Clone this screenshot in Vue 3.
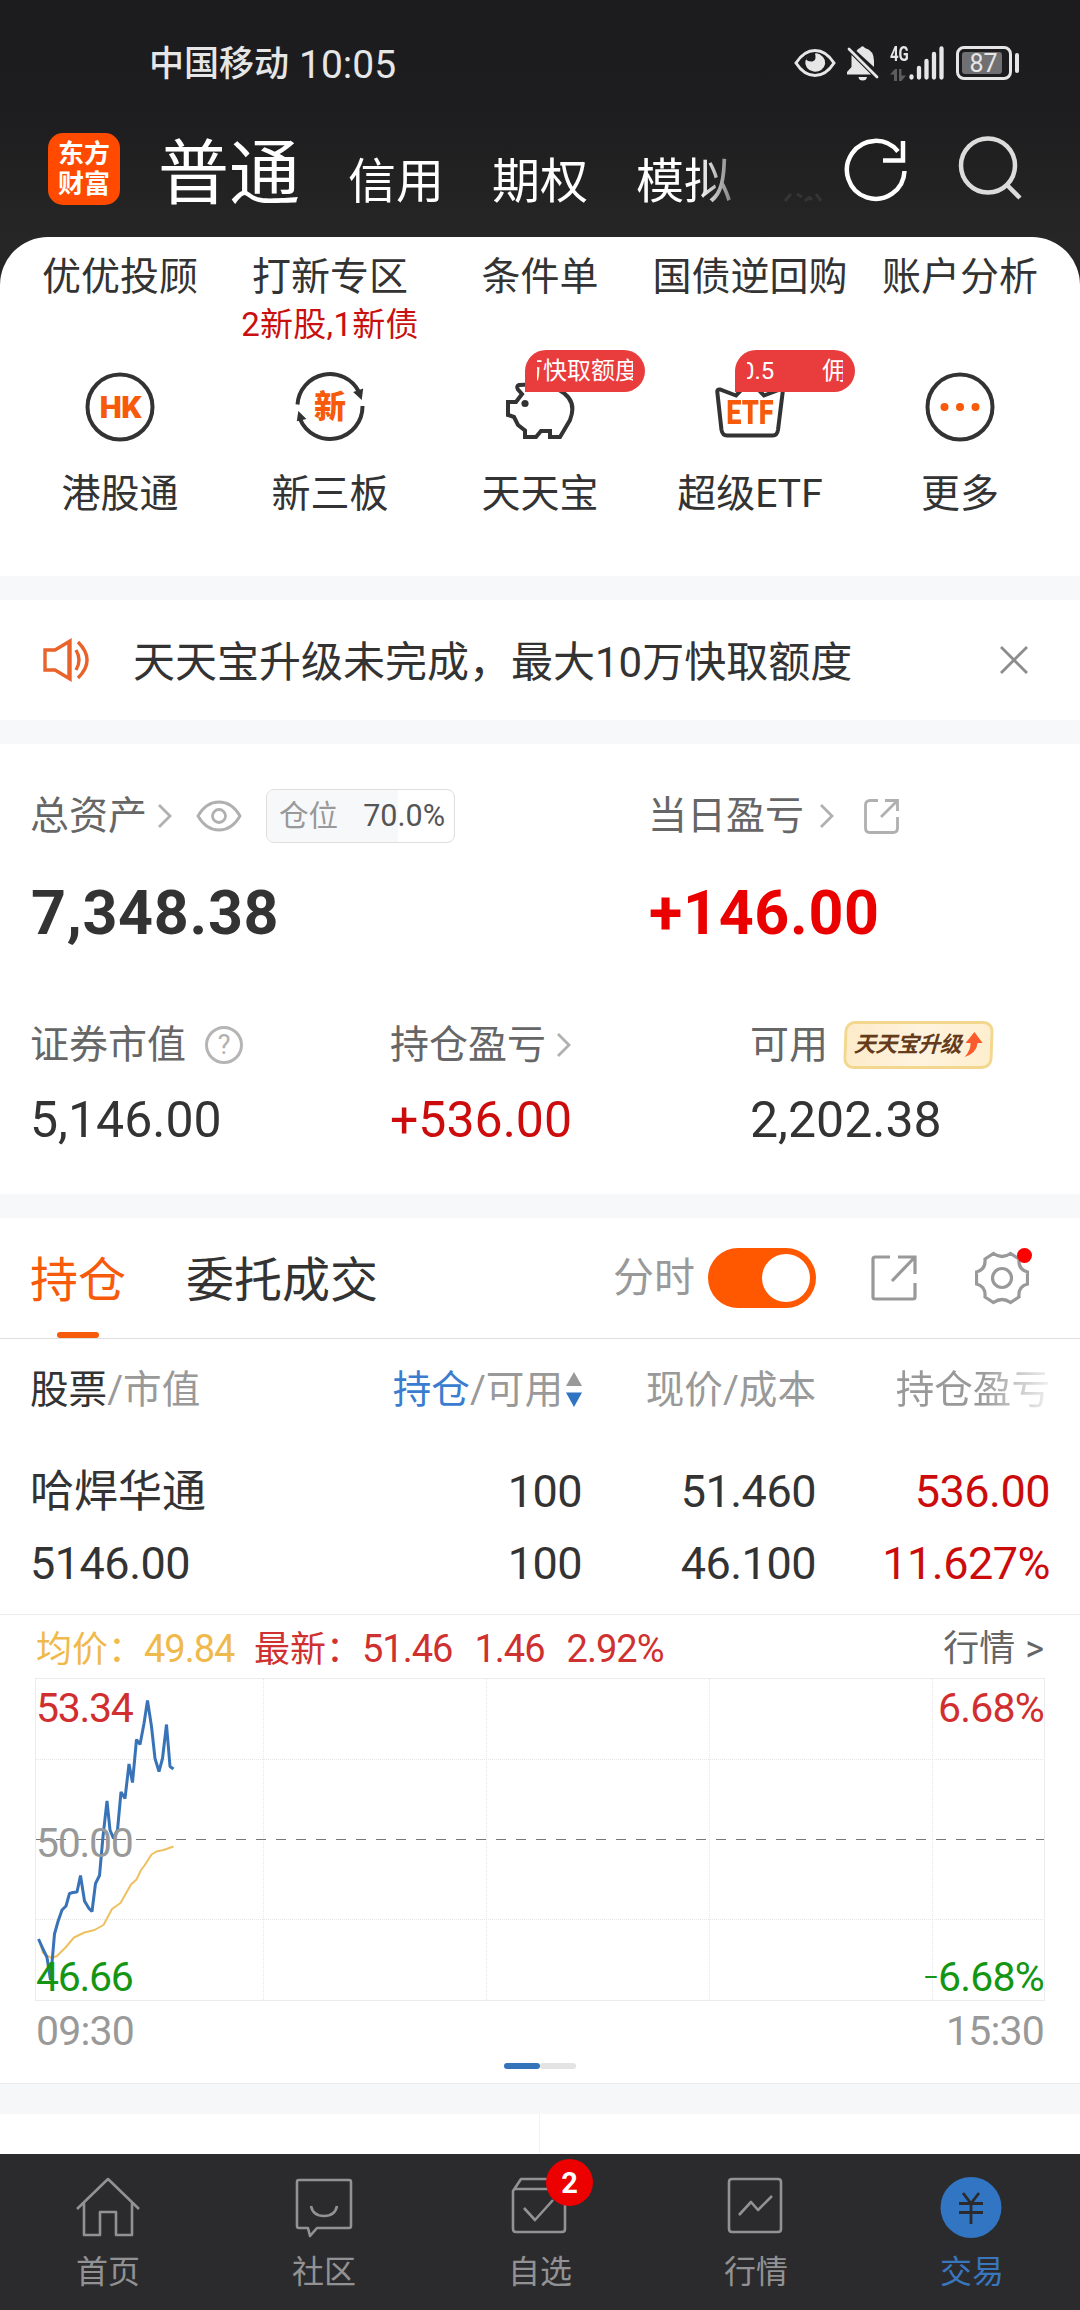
<script setup>
import { ref } from 'vue'

const accountTabs = ['信用', '期权', '模拟']

const shortcuts = [
  { name: '优优投顾' },
  { name: '打新专区', tip: '2新股,1新债' },
  { name: '条件单' },
  { name: '国债逆回购' },
  { name: '账户分析' },
]

const services = [
  { name: '港股通', icon: 'hk' },
  { name: '新三板', icon: 'xin' },
  { name: '天天宝', icon: 'pig', badge: ['万快取额度'] },
  { name: '超级ETF', icon: 'etf', badge: ['0.5', '佣'] },
  { name: '更多', icon: 'more' },
]

const positionRate = ref(70)
const showTimeline = ref(true)

const holdings = [
  { name: '哈焊华通', value: '5146.00', amount: '100', usable: '100', price: '51.460', cost: '46.100', profit: '536.00', rate: '11.627%' },
]

// chart drawing area is 1008 x 321
const gridX = [227.5, 450.5, 673.5, 896.5]
const gridY = [80.5, 240.5]
const priceLine = '2.5,260 7,270 11,278.5 14.5,301 18.5,255 22,242.5 26,231 30,227 33.5,214.5 37,213.5 41,213 44.5,196.5 48.5,222 53,229.5 56,232.5 59.5,204.5 63.5,196.5 67,157.5 71,122 74,151 77.5,159.5 81.5,151 85,113 89,119.5 93,85 96.5,103.5 100.5,60.5 104,65.5 108,44.5 111.5,21.5 115.5,47.5 119,79.5 123,92.5 126.5,79.5 130.5,45.5 134,87.5 137.5,90'
const avgLine = '3,261 7,274 15.5,279 21,277 29.5,268.5 38,258.5 48.5,253.5 58.5,251 67.5,246 76,230 84.5,224 95,205.5 100.5,200.5 105,191 108.5,186.5 115.5,175.5 120.5,172.5 127.5,171 137.5,167.5'

const activeNav = ref('交易')
const navs = [
  { name: '首页', icon: 'home' },
  { name: '社区', icon: 'chat' },
  { name: '自选', icon: 'pick', count: 2 },
  { name: '行情', icon: 'quote' },
  { name: '交易', icon: 'trade' },
]
</script>

<template>
  <div class="page">
    <header class="header">
      <div class="status">
        <div class="carrier">中国移动 <span class="clock">10:05</span></div>
        <div class="status-icons">
          <svg class="s-eye" width="42" height="30" viewBox="0 0 42 30">
            <path d="M2 15 Q10 2.5 21 2.5 T40 15 Q32 27.5 21 27.5 T2 15Z" fill="none" stroke="#e6e6e6" stroke-width="3" />
            <path d="M16 7 a10 9 0 1 0 13 2 Q25 4.500 21 5.500 Q23 12 18.500 13.500 Q14 14 12 11.500 Q13 8.500 16 7Z" fill="#e6e6e6" />
          </svg>
          <svg class="s-bell" width="32" height="35" viewBox="0 0 32 35">
            <path d="M4.500 9 L24 28.500 H0 V26 L4.500 21Z M9.500 5 Q11 2.500 13 2 Q15.500 -1.500 18 2 Q27 4.500 27 15 V21Z M11.500 31 H20 Q19.500 34.500 15.700 34.500 T11.500 31Z" fill="#e6e6e6" />
            <path d="M2 3 L30 31" stroke="#e6e6e6" stroke-width="2.800" stroke-linecap="round" />
          </svg>
          <div class="signal">
            <div class="net">
              <span>4G</span>
              <svg width="16" height="12" viewBox="0 0 16 12" fill="#5c5c5e">
                <path d="M0 5.500 L5 0 H7 V12 H4 V5.500Z M9 0 H11.500 V6.500 H16 L11.500 12 H9Z" />
              </svg>
            </div>
            <svg width="35" height="35" viewBox="0 0 35 35" stroke="#e6e6e6" stroke-width="4.300" stroke-linecap="round">
              <path d="M2.500 30.500 V31.500 M10 22 V31.500 M17.500 15 V31.500 M25 8 V31.500 M32.500 2.500 V31.500" />
            </svg>
          </div>
          <div class="battery"><span>87</span></div>
        </div>
      </div>
      <div class="topbar">
        <div class="logo">东方<br>财富</div>
        <div class="accounts">
          <span class="current">普通</span>
          <span v-for="tab in accountTabs" :key="tab" class="account">{{ tab }}</span>
        </div>
        <!-- tail of the next tab under the fade -->
        <svg class="tab-tail" width="38" height="9" viewBox="0 0 38 9" fill="none" stroke="#353537" stroke-width="3">
          <path d="M1 8 L7 1 M13 1 L18 4 M21 8 L26 4 M28 7 L25 4 M32 1 L37 8" />
        </svg>
        <svg class="refresh" width="66" height="70" viewBox="0 0 66 70" fill="none" stroke="#fff" stroke-width="4.500">
          <path d="M60.500 36 A28.800 29 0 1 1 54 16.500 M59 6 V25.500 H39" />
        </svg>
        <svg class="search" width="66" height="70" viewBox="0 0 66 70" fill="none" stroke="#dcdcdc" stroke-width="4.500">
          <circle cx="31" cy="30.500" r="27" />
          <path d="M50 50 L63 63" />
        </svg>
      </div>
    </header>

    <section class="menu">
      <div class="shortcuts">
        <div v-for="item in shortcuts" :key="item.name" class="shortcut">
          <p>{{ item.name }}</p>
          <small v-if="item.tip">{{ item.tip }}</small>
        </div>
      </div>
      <div class="services">
        <div v-for="item in services" :key="item.name" class="service">
          <div class="service-icon">
            <svg width="70" height="70" viewBox="0 0 70 70" fill="none" stroke="#333" stroke-width="4">
              <circle v-if="item.icon === 'hk' || item.icon === 'more'" cx="35" cy="35" r="32.500" />
              <g v-if="item.icon === 'more'" fill="#f65a0a" stroke="none">
                <circle cx="19.500" cy="35" r="4" /><circle cx="35" cy="35" r="4" /><circle cx="50.500" cy="35" r="4" />
              </g>
              <g v-if="item.icon === 'xin'">
                <path d="M2.500 32.500 A32.500 32.500 0 0 1 64 20" />
                <path d="M67.500 34 A32.500 32.500 0 0 1 5 47" />
                <path d="M60 20.500 L67 18 L66 26Z M3 48 L4 41 L9.500 46.500Z" fill="#333" stroke-width="2" />
              </g>
              <g v-if="item.icon === 'pig'">
                <path d="M25 12.500 L14 13 Q11 14 13 17.500 L17 22 L11 30 H3 V43 L9 45 L13 53 L20 58.500 V65 H31 L36 59 H45 V65 H55 L65 48 Q73 28 54 18 L40 12" />
                <circle cx="20" cy="31.500" r="3.600" fill="#333" stroke="none" />
              </g>
              <g v-if="item.icon === 'etf'">
                <path d="M35 9 L21 23.500 L5 17.500 Q2 17 2.300 20 L6.500 58 Q7.500 63.500 12 63.500 H58 Q62 63.500 63 58 L67.700 20 Q68 16.500 65 17.500 L49 23.500Z" />
              </g>
            </svg>
            <b v-if="item.icon === 'hk'" class="icon-text hk">HK</b>
            <b v-if="item.icon === 'xin'" class="icon-text">新</b>
            <b v-if="item.icon === 'etf'" class="icon-text etf">ETF</b>
            <div v-if="item.badge" class="bubble">
              <div class="marquee" :class="item.icon"><span v-for="t in item.badge" :key="t">{{ t }}</span></div>
            </div>
          </div>
          <p>{{ item.name }}</p>
        </div>
      </div>
    </section>

    <section class="notice">
      <svg width="48" height="44" viewBox="0 0 48 44" fill="none" stroke="#e8622a" stroke-width="3.400">
        <path d="M2 12 H12 L27 3 V41 L12 32 H2Z M26 3 V41" />
        <path d="M33 12 Q39 22 33 32 M35 4 Q53 22 35 40" />
      </svg>
      <p>天天宝升级未完成，最大10万快取额度</p>
      <svg class="close" width="30" height="30" viewBox="0 0 30 30" stroke="#8c8c8c" stroke-width="2.800">
        <path d="M2 2 L28 28 M28 2 L2 28" />
      </svg>
    </section>

    <section class="assets">
      <div class="total">
        <div class="total-col">
          <div class="label">
            总资产
            <svg class="arrow" width="16" height="26" viewBox="0 0 16 26"><path d="M2 2 L13 13 L2 24" /></svg>
            <svg class="eye" width="46" height="32" viewBox="0 0 46 32"><path d="M2 16 Q10 2 23 2 T44 16 Q36 30 23 30 T2 16Z" /><circle cx="23" cy="16" r="6.500" /></svg>
            <div class="rate">
              <div class="rate-fill" :style="{ width: positionRate + '%' }"></div>
              <span>仓位</span><em>{{ positionRate.toFixed(1) }}%</em>
            </div>
          </div>
          <div class="big">7,348.38</div>
        </div>
        <div class="total-col">
          <div class="label">
            当日盈亏
            <svg class="arrow wide" width="16" height="26" viewBox="0 0 16 26"><path d="M2 2 L13 13 L2 24" /></svg>
            <svg class="share" width="37" height="37" viewBox="0 0 37 37"><path d="M15 2.500 H7 Q2.500 2.500 2.500 7 V30 Q2.500 34.500 7 34.500 H30 Q34.500 34.500 34.500 30 V19 M22 2.500 H34.500 V13 M34 3 L18 19" /></svg>
          </div>
          <div class="big up">+146.00</div>
        </div>
      </div>
      <div class="detail">
        <div class="detail-col">
          <div class="label">证券市值<span class="help">?</span></div>
          <div class="num">5,146.00</div>
        </div>
        <div class="detail-col">
          <div class="label">持仓盈亏<svg class="arrow" width="16" height="26" viewBox="0 0 16 26"><path d="M2 2 L13 13 L2 24" /></svg></div>
          <div class="num red">+536.00</div>
        </div>
        <div class="detail-col">
          <div class="label">
            可用
            <div class="upgrade">
              <span>天天宝升级</span>
              <svg width="20" height="26" viewBox="0 0 20 26"><path d="M11 0 L19.500 11 H14.500 Q14 21 2 25 Q8 18 7.500 11 H2.500Z" fill="#fb5b2c" /></svg>
            </div>
          </div>
          <div class="num">2,202.38</div>
        </div>
      </div>
    </section>

    <section class="holding">
      <div class="tabs">
        <div class="tab active">持仓</div>
        <div class="tab">委托成交</div>
        <div class="tools">
          <span>分时</span>
          <div class="switch" :class="{ on: showTimeline }" @click="showTimeline = !showTimeline"><i></i></div>
          <svg class="tool-share" width="46" height="46" viewBox="0 0 46 46"><path d="M19 2 H4 Q2 2 2 4 V42 Q2 44 4 44 H42 Q44 44 44 42 V28 M27 2 H44 V19 M43 3 L21 26" /></svg>
          <div class="gear">
            <svg width="54" height="54" viewBox="0 0 54 54">
              <path d="M10 8 L18.500 2.500 Q27 8.500 35.500 2.500 L44 8 Q43 18.500 52.500 21 V33 Q43 35.500 44 46 L35.500 51.500 Q27 45.500 18.500 51.500 L10 46 Q11 35.500 1.500 33 V21 Q11 18.500 10 8Z" />
              <circle cx="27" cy="27" r="9.500" />
            </svg>
            <i class="dot"></i>
          </div>
        </div>
      </div>

      <div class="row table-head">
        <div class="c1"><b>股票</b>/市值</div>
        <div class="c2">
          <span class="blue">持仓</span>/可用
          <svg width="16" height="35" viewBox="0 0 16 35"><path d="M8 0 L16 14 H0Z" fill="#999" /><path d="M0 20.500 H16 L8 35Z" fill="#2f73c2" /></svg>
        </div>
        <div class="c3">现价/成本</div>
        <div class="c4 fade">持仓盈亏</div>
      </div>
      <div v-for="h in holdings" :key="h.name" class="stock">
        <div class="row">
          <div class="c1 stock-name">{{ h.name }}</div>
          <div class="c2">{{ h.amount }}</div>
          <div class="c3">{{ h.price }}</div>
          <div class="c4 red">{{ h.profit }}</div>
        </div>
        <div class="row">
          <div class="c1">{{ h.value }}</div>
          <div class="c2">{{ h.usable }}</div>
          <div class="c3">{{ h.cost }}</div>
          <div class="c4 red">{{ h.rate }}</div>
        </div>
      </div>

      <div class="timeline">
        <div class="quote">
          <span class="avg">均价：<i>49.84</i></span>
          <span class="latest">最新：<i>51.46</i><i>1.46</i><i>2.92%</i></span>
          <span class="more">行情 <b>&gt;</b></span>
        </div>
        <div class="chart">
          <svg width="1008" height="321" viewBox="0 0 1008 321" fill="none">
            <g stroke="#e6e6e6" stroke-width="1" stroke-dasharray="1 1">
              <path v-for="x in gridX" :key="'x' + x" :d="`M${x} 0 V321`" />
              <path v-for="y in gridY" :key="'y' + y" :d="`M0 ${y} H1008`" />
            </g>
            <path d="M0 160.500 H1008" stroke="#777" stroke-dasharray="10 10" />
            <polyline :points="avgLine" stroke="#eec05f" stroke-width="2" stroke-linejoin="round" />
            <polyline :points="priceLine" stroke="#3873b8" stroke-width="3" stroke-linejoin="bevel" />
          </svg>
          <div class="axis"><span class="high">53.34</span><span class="mid">50.00</span><span class="low">46.66</span></div>
          <div class="axis right"><span class="high">6.68%</span><span class="low"><i>−</i>6.68%</span></div>
        </div>
        <div class="times"><span>09:30</span><span>15:30</span></div>
        <div class="pager"><i class="on"></i><i></i></div>
      </div>
    </section>

    <div class="split"></div>
    <section class="next"><div></div><div></div></section>

    <nav class="nav">
      <div v-for="item in navs" :key="item.name" class="nav-item" :class="{ active: activeNav === item.name }" @click="activeNav = item.name">
        <div class="nav-icon">
          <svg width="66" height="64" viewBox="0 0 66 64" fill="none" stroke="#929294" stroke-width="2.600" stroke-linejoin="round">
            <path v-if="item.icon === 'home'" d="M2 34 L33 4 L64 34 M9 28 V60 H25 V37 H41 V60 H57 V28" />
            <path v-if="item.icon === 'chat'" d="M8 5 H58 Q60 5 60 7 V51 Q60 53 58 53 H26 L19 61 L17 53 H8 Q6 53 6 51 V7 Q6 5 8 5Z M20 31 Q22 41 33 41 T46 31" />
            <path v-if="item.icon === 'pick'" d="M7 14 H57 Q58 14 58 16 V54 Q58 57 55 57 H9 Q6 57 6 54 V16 L14 4 H50 L58 15 M17 33 L28 45 L46 25" />
            <path v-if="item.icon === 'quote'" d="M9 4 H55 Q58 4 58 7 V54 Q58 57 55 57 H9 Q6 57 6 54 V7 Q6 4 9 4Z M16 40 L28 27 L35 35 L49 21" />
            <g v-if="item.icon === 'trade'">
              <circle cx="32" cy="32.500" r="30.500" fill="#3175c3" stroke="none" />
              <path d="M24 18 L32 28.500 L40 18 M32 28.500 V49 M20 28.500 H44 M20 37.500 H44" stroke="#2b2b2d" stroke-width="2.800" />
            </g>
          </svg>
          <span v-if="item.count" class="count">{{ item.count }}</span>
        </div>
        <p>{{ item.name }}</p>
      </div>
    </nav>
  </div>
</template>

<style>
body {
  margin: 0;
  background: #fff;
}
</style>

<style scoped>
.page {
  width: 1080px;
  height: 2310px;
  overflow: hidden;
  display: flex;
  flex-direction: column;
  background: #f7f8fa;
  color: #333;
  font-family: Roboto, "Noto Sans CJK SC", sans-serif;
}

p {
  margin: 0;
}

i,
em {
  font-style: normal;
}

/* header */
.header {
  height: 285px;
  margin-bottom: -48px;
  background: linear-gradient(#1c1c1e 0, #1d1d1f 110px, #262626 237px);
  flex: none;
}

.status {
  height: 126px;
  padding: 0 61px 0 149px;
  display: flex;
  justify-content: space-between;
  align-items: center;
  color: #e6e6e6;
}

.carrier {
  padding-top: 4px;
  font-size: 35px;
  line-height: 48px;
  font-weight: 500;
  display: flex;
  gap: 10px;
}

.clock {
  font-size: 39px;
  font-weight: 400;
}

.status-icons {
  display: flex;
  align-items: center;
}

.s-bell {
  margin: 0 11px 0 11px;
}

.signal {
  display: flex;
  align-items: center;
}

.net {
  width: 19px;
  height: 35px;
  display: flex;
  flex-direction: column;
  justify-content: space-between;
  font-size: 20px;
  line-height: 17px;
  font-weight: 700;
}

.net span {
  transform: scaleX(0.75);
  transform-origin: left;
}

.battery {
  position: relative;
  box-sizing: border-box;
  width: 56px;
  height: 34px;
  margin: 0 7px 0 12px;
  padding: 3px;
  border: 3px solid #e6e6e6;
  border-radius: 8px;
}

.battery span {
  display: block;
  width: 37px;
  height: 22px;
  padding-left: 3px;
  border-radius: 3px;
  background: #707072;
  font-size: 25px;
  line-height: 23px;
  text-align: center;
}

.battery::after {
  content: "";
  position: absolute;
  right: -10px;
  top: 4px;
  width: 4px;
  height: 20px;
  border-radius: 2px;
  background: #e6e6e6;
}

.topbar {
  height: 110px;
  padding-left: 48px;
  display: flex;
  align-items: flex-start;
}

.logo {
  width: 72px;
  height: 72px;
  margin-top: 7px;
  padding-top: 6px;
  box-sizing: border-box;
  border-radius: 15px;
  background: #ff4a00;
  color: #fff;
  font-size: 26px;
  line-height: 30px;
  font-weight: 700;
  text-align: center;
}

.accounts {
  width: 626px;
  margin-left: 38px;
  padding-top: 2px;
  display: flex;
  align-items: baseline;
  gap: 48px;
  color: #fff;
  -webkit-mask-image: linear-gradient(90deg, #000 540px, transparent 600px);
  mask-image: linear-gradient(90deg, #000 540px, transparent 600px);
}

.accounts .current {
  font-size: 71px;
  line-height: 92px;
  font-weight: 400;
}

.account {
  font-size: 48px;
}

.tab-tail {
  margin-top: 67px;
  flex: none;
}

.refresh {
  margin: 9px 0 0 22px;
  flex: none;
}

.search {
  margin: 9px 0 0 47px;
  flex: none;
}

/* menu */
.menu {
  height: 339px;
  border-radius: 48px 48px 0 0;
  background: #fff;
  flex: none;
}

.shortcuts,
.services {
  padding: 0 15px;
  display: flex;
}

.shortcut,
.service {
  width: 210px;
  text-align: center;
  font-size: 39px;
  line-height: 48px;
  white-space: nowrap;
}

.shortcut {
  height: 135px;
  padding-top: 16px;
  box-sizing: border-box;
}

.shortcut small {
  display: block;
  color: #c9100f;
  font-size: 33px;
  letter-spacing: 0.300px;
}

.service p {
  margin-top: 28px;
}

.service-icon {
  position: relative;
  width: 70px;
  height: 70px;
  margin: 0 auto;
}

.service-icon svg {
  display: block;
}

.icon-text {
  position: absolute;
  left: 0;
  right: 0;
  top: 0;
  color: #f65a0a;
  font-size: 32px;
  line-height: 70px;
  font-weight: 900;
}

.icon-text.hk {
  letter-spacing: -1px;
}

.icon-text.etf {
  font-size: 33px;
  line-height: 82px;
  transform: scaleX(0.82);
}

.bubble {
  position: absolute;
  left: 20px;
  top: -22px;
  width: 120px;
  height: 42px;
  padding: 0 12px;
  box-sizing: border-box;
  border-radius: 21px 21px 21px 0;
  background: #e93c3c;
  color: #fff;
  font-size: 24px;
  line-height: 43px;
}

.marquee {
  display: flex;
  justify-content: flex-end;
  overflow: hidden;
  white-space: nowrap;
}

.marquee.pig span {
  margin-right: -6px;
}

.marquee.etf {
  justify-content: flex-start;
  gap: 48px;
}

.marquee.etf span:first-child {
  margin-left: -6px;
}

/* notice */
.notice {
  height: 120px;
  margin: 24px 0;
  padding: 0 51px 0 43px;
  background: #fff;
  display: flex;
  align-items: center;
  flex: none;
}

.notice p {
  flex: 1;
  margin-left: 42px;
  padding-top: 5px;
  font-size: 42px;
  line-height: 60px;
}

/* assets */
.assets {
  height: 450px;
  background: #fff;
  flex: none;
}

.label {
  height: 56px;
  display: flex;
  align-items: center;
  font-size: 39px;
  line-height: 56px;
  color: #666;
}

.arrow,
.eye,
.share {
  fill: none;
  stroke: #b0b0b0;
  stroke-width: 2.800;
}

.arrow {
  margin-left: 10px;
}

.arrow.wide {
  margin-left: 15px;
}

.eye {
  margin-left: 23px;
}

.share {
  margin-left: 28px;
}

.total {
  display: flex;
  padding: 44px 0 0 30px;
}

.total-col:first-child {
  width: 618px;
}

.rate {
  position: relative;
  box-sizing: border-box;
  width: 189px;
  height: 54px;
  margin-left: 24px;
  padding: 0 9px 0 12px;
  border: 1px solid #dedede;
  border-radius: 8px;
  overflow: hidden;
  display: flex;
  justify-content: space-between;
  align-items: center;
  font-size: 29.500px;
  color: #999;
}

.rate-fill {
  position: absolute;
  left: 0;
  top: 0;
  height: 100%;
  background: #f7f8fa;
}

.rate span,
.rate em {
  position: relative;
}

.rate em {
  color: #555;
  font-size: 30.500px;
}

.big {
  margin: 29px 0 0 1px;
  font-size: 61px;
  line-height: 80px;
  font-weight: 700;
  letter-spacing: 0.700px;
}

.up {
  color: #eb0000;
}

.red {
  color: #cc0c0c;
}

.detail {
  display: flex;
  padding: 64px 0 0 30px;
}

.detail-col {
  width: 360px;
  flex: none;
}

.num {
  margin-top: 17px;
  font-size: 50px;
  line-height: 60px;
}

.help {
  box-sizing: border-box;
  width: 38px;
  height: 38px;
  margin-left: 19px;
  border: 3px solid #b5b5b5;
  border-radius: 50%;
  color: #b0b0b0;
  font-size: 27px;
  line-height: 33px;
  text-align: center;
}

.upgrade {
  box-sizing: border-box;
  width: 149px;
  height: 48px;
  margin-left: 16px;
  border: 3px solid #f3d78f;
  border-radius: 10px;
  background: linear-gradient(100deg, #fdebc9, #fff3df 50%, #fdeecd);
  display: flex;
  align-items: center;
  justify-content: center;
  gap: 2px;
  transform: skewX(-2deg);
  color: #643c1c;
  font-size: 22px;
  font-weight: 700;
  font-style: italic;
  letter-spacing: -0.500px;
}

/* holding */
.holding {
  height: 865px;
  margin-top: 24px;
  background: #fff;
  border-bottom: 1px solid #ececec;
  box-sizing: content-box;
  flex: none;
}

.tabs {
  height: 121px;
  box-sizing: border-box;
  border-bottom: 1px solid #dedede;
  padding-left: 30px;
  display: flex;
}

.tab {
  position: relative;
  margin-right: 60px;
  font-size: 48px;
  line-height: 126px;
  height: 120px;
}

.tab.active {
  color: #f65a0a;
}

.tab.active::after {
  content: "";
  position: absolute;
  left: 27px;
  bottom: 0;
  width: 42px;
  height: 6px;
  border-radius: 3px;
  background: #f65a0a;
}

.tools {
  margin-left: auto;
  padding-right: 51px;
  display: flex;
  align-items: center;
  color: #999;
  font-size: 41px;
  line-height: 56px;
}

.tools svg {
  fill: none;
  stroke: #999;
  stroke-width: 3.200;
  display: block;
}

.switch {
  width: 96px;
  height: 48px;
  margin: 0 55px 0 13px;
  padding: 6px;
  border-radius: 30px;
  background: #bbb;
  display: flex;
}

.switch.on {
  background: #ff5800;
  justify-content: flex-end;
}

.switch i {
  width: 48px;
  height: 48px;
  border-radius: 50%;
  background: #fff;
}

.gear {
  position: relative;
  margin-left: 58px;
}

.dot {
  position: absolute;
  right: -3px;
  top: -3px;
  width: 15px;
  height: 15px;
  border-radius: 50%;
  background: #f00;
}

.row {
  display: flex;
  padding: 0 30px;
  height: 72px;
  line-height: 72px;
  font-size: 45px;
  letter-spacing: -0.500px;
}

.row > div {
  text-align: right;
  white-space: nowrap;
}

.row .c1 {
  width: 300px;
  text-align: left;
}

.c2 {
  width: 252px;
}

.c3 {
  width: 234px;
}

.c4 {
  width: 234px;
}

.row .stock-name {
  font-size: 44px;
  letter-spacing: 0;
}

.table-head {
  height: 100px;
  line-height: 101px;
  font-size: 38.600px;
  letter-spacing: 0;
  color: #999;
}

.table-head b {
  color: #333;
  font-weight: 400;
}

.table-head .c2 {
  display: flex;
  align-items: center;
  justify-content: flex-end;
}

.table-head svg {
  margin-left: 3px;
}

.blue {
  color: #3a7dd0;
}

.fade {
  -webkit-mask-image: linear-gradient(90deg, #000 165px, transparent 245px);
  mask-image: linear-gradient(90deg, #000 165px, transparent 245px);
}

.stock {
  padding: 17px 0 14px;
  border-bottom: 1px solid #ececec;
}

/* timeline */
.timeline {
  padding: 0 36px;
}

.quote {
  height: 64px;
  display: flex;
  font-size: 36px;
  line-height: 68px;
}

.quote i {
  font-size: 38px;
  letter-spacing: -1px;
}

.avg {
  width: 218px;
  color: #f0b94c;
}

.latest {
  color: #cf3030;
}

.latest i + i {
  margin-left: 22px;
}

.more {
  margin-left: auto;
  color: #666;
}

.more b {
  margin-left: 1px;
  font-weight: 400;
}

.chart {
  position: relative;
  height: 321px;
  box-shadow: 0 0 0 1px #ececec;
}

.chart svg {
  display: block;
}

.axis {
  position: absolute;
  inset: 0;
  padding: 6px 0 0;
  display: flex;
  flex-direction: column;
  justify-content: space-between;
  font-size: 41px;
  line-height: 46px;
  letter-spacing: -1.300px;
}

.axis.right {
  text-align: right;
  letter-spacing: -0.800px;
}

.axis.right i {
  font-size: 28px;
  vertical-align: 4px;
  line-height: 1;
}

.high {
  color: #d12f2f;
}

.mid {
  color: #999;
}

.low {
  color: #149614;
}

.times {
  display: flex;
  justify-content: space-between;
  font-size: 41px;
  line-height: 62px;
  letter-spacing: -0.800px;
  color: #999;
}

.pager {
  display: flex;
  justify-content: center;
  padding-top: 1px;
}

.pager i {
  width: 36px;
  height: 6px;
  border-radius: 3px;
  background: #e3e3e3;
}

.pager i.on {
  background: #3573ba;
}

.split {
  height: 30px;
  background: #f6f7f9;
  flex: none;
}

.next {
  height: 40px;
  display: flex;
  background: #fff;
  flex: none;
}

.next div {
  width: 539px;
}

.next div + div {
  border-left: 1px solid #f3f3f3;
}

/* bottom nav */
.nav {
  height: 156px;
  background: #2b2b2d;
  display: flex;
  flex: none;
}

.nav-item {
  flex: 1;
  display: flex;
  flex-direction: column;
  align-items: center;
  padding-top: 21px;
  color: #929294;
  font-size: 32px;
  line-height: 40px;
}

.nav-item p {
  margin-top: 13px;
}

.nav-item.active {
  color: #3a76bd;
}

.nav-icon {
  position: relative;
  height: 64px;
}

.count {
  position: absolute;
  left: 39px;
  top: -16px;
  width: 47px;
  height: 47px;
  border-radius: 50%;
  background: #ec0000;
  color: #fff;
  font-size: 29px;
  line-height: 48px;
  font-weight: 700;
  text-align: center;
}
</style>
